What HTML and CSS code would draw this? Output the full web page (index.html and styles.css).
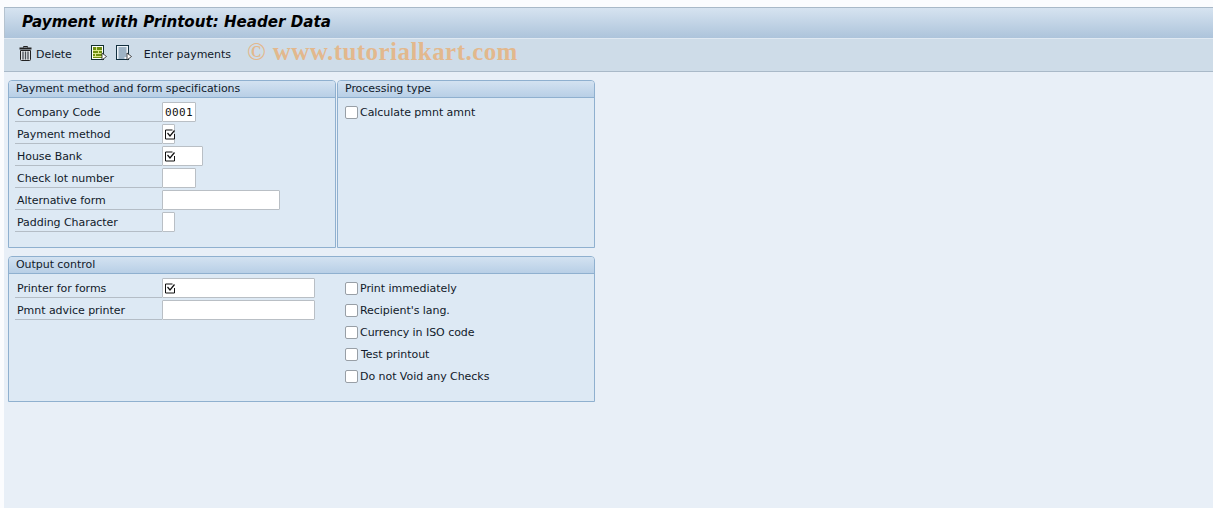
FILE: index.html
```html
<!DOCTYPE html>
<html lang="en">
<head>
<meta charset="utf-8">
<title>Payment with Printout: Header Data</title>
<link rel="stylesheet" href="styles.css">
</head>
<body>
<div class="app">
  <header class="titlebar"><h1>Payment with Printout: Header Data</h1></header>
  <nav class="toolbar">
    <button class="tool tool-delete">
      <svg class="ico" width="13" height="15" viewBox="0 0 13 15">
        <path d="M4.500 1.500V.5h4v1" fill="none" stroke="#222"/>
        <path d="M.5 2.500h12" stroke="#222" stroke-width="2"/>
        <path d="M1.500 4.500h10v9a1 1 0 0 1-1 1h-8a1 1 0 0 1-1-1z" fill="#e2e5e7" stroke="#222"/>
        <path d="M4 5.500v8M6.500 5.500v8M9 5.500v8" stroke="#4a4f55" stroke-width="1.300"/>
      </svg>
      <span>Delete</span>
    </button>
    <button class="tool tool-green">
      <svg class="ico" width="16" height="16" viewBox="0 0 16 16">
        <rect x=".5" y=".5" width="12" height="14" fill="#fff" stroke="#12302f"/>
        <rect x="2" y="2" width="9" height="11" fill="#6f8f12"/>
        <path d="M2 5.500h9M2 8.500h9M2 11.500h9" stroke="#dbe88c"/>
        <path d="M5.500 2v3M7.500 6v2M4.500 9v2" stroke="#dbe88c"/>
        <path d="M11 8v7l4.500-3.500z" fill="#fff" stroke="#222" stroke-width=".8"/>
      </svg>
    </button>
    <button class="tool tool-blue">
      <svg class="ico" width="16" height="16" viewBox="0 0 16 16">
        <rect x=".5" y=".5" width="12" height="14" fill="#eef3f8" stroke="#12303f"/>
        <path d="M2.500 3h8M2.500 5h8M2.500 7h8M2.500 9h8M2.500 11h8M2.500 13h6" stroke="#4f7492"/>
        <path d="M11 8v7l4.500-3.500z" fill="#fff" stroke="#222" stroke-width=".8"/>
      </svg>
    </button>
    <button class="tool tool-enter"><span>Enter payments</span></button>
    <div class="watermark">© www.tutorialkart.com</div>
  </nav>
  <main class="content">
    <div class="top-groups">
      <section class="panel panel-spec">
        <h2>Payment method and form specifications</h2>
        <div class="rows">
          <div class="row"><label>Company Code</label><div class="field w34">0001</div></div>
          <div class="row"><label>Payment method</label><div class="field w13"><svg class="req" width="11" height="11" viewBox="0 0 11 11"><path d="M9.500 5v5H.5V1h7" fill="none" stroke="#111"/><path d="M2.500 4l2.500 3L9.500 1.500" fill="none" stroke="#111" stroke-width="1.200"/></svg></div></div>
          <div class="row"><label>House Bank</label><div class="field w41"><svg class="req" width="11" height="11" viewBox="0 0 11 11"><path d="M9.500 5v5H.5V1h7" fill="none" stroke="#111"/><path d="M2.500 4l2.500 3L9.500 1.500" fill="none" stroke="#111" stroke-width="1.200"/></svg></div></div>
          <div class="row"><label>Check lot number</label><div class="field w34"></div></div>
          <div class="row"><label>Alternative form</label><div class="field w118"></div></div>
          <div class="row"><label>Padding Character</label><div class="field w13"></div></div>
        </div>
      </section>
      <section class="panel panel-proc">
        <h2>Processing type</h2>
        <div class="rows checks">
          <div class="check"><span class="box"></span><span>Calculate pmnt amnt</span></div>
        </div>
      </section>
    </div>
    <section class="panel panel-output">
      <h2>Output control</h2>
      <div class="output-body">
        <div class="rows">
          <div class="row"><label>Printer for forms</label><div class="field w153"><svg class="req" width="11" height="11" viewBox="0 0 11 11"><path d="M9.500 5v5H.5V1h7" fill="none" stroke="#111"/><path d="M2.500 4l2.500 3L9.500 1.500" fill="none" stroke="#111" stroke-width="1.200"/></svg></div></div>
          <div class="row"><label>Pmnt advice printer</label><div class="field w153"></div></div>
        </div>
        <div class="rows checks">
          <div class="check"><span class="box"></span><span>Print immediately</span></div>
          <div class="check"><span class="box"></span><span>Recipient's lang.</span></div>
          <div class="check"><span class="box"></span><span>Currency in ISO code</span></div>
          <div class="check check-wide"><span class="box"></span><span>Test printout</span></div>
          <div class="check"><span class="box"></span><span>Do not Void any Checks</span></div>
        </div>
      </div>
    </section>
  </main>
</div>
</body>
</html>
```
FILE: styles.css
```css
html, body {
  margin: 0;
  height: 100%;
  background: #fbfcfe;
  overflow: hidden;
}
body {
  font-family: "DejaVu Sans", sans-serif;
  font-size: 11px;
  letter-spacing: -.05px;
  color: #111a2a;
}
.app {
  margin: 7px 0 0 4px;
  height: 501px;
  background: #e8eff7;
  border-top: 1px solid #a9b9c8;
}
.titlebar {
  height: 30px;
  display: flex;
  align-items: center;
  padding-left: 17px;
  background: linear-gradient(#d6e3f0, #adc4db);
  border-left: 1px solid #b5c3d0;
}
.titlebar h1 {
  margin: 0;
  font-size: 15.1px;
  font-weight: bold;
  font-style: italic;
  letter-spacing: 0;
  color: #000;
  white-space: nowrap;
  position: relative;
  top: -1px;
}
.toolbar {
  position: relative;
  height: 30px;
  display: flex;
  align-items: center;
  background: #cedce8;
  border-top: 1px solid #e0e9f2;
  border-bottom: 1px solid #a9b9c8;
  padding: 0 0 2px 15px;
}
.tool {
  display: flex;
  align-items: center;
  gap: 4px;
  padding: 0;
  border: 0;
  background: none;
  font: inherit;
  letter-spacing: inherit;
  color: inherit;
}
.tool-green { margin-left: 19px; }
.tool-blue { margin-left: 9px; }
.tool-enter { margin-left: 12px; }
.ico { display: block; margin-top: -2px; }
.watermark {
  position: absolute;
  left: 243px;
  top: -1px;
  line-height: 28px;
  font-family: "Liberation Serif", serif;
  font-weight: bold;
  font-size: 25px;
  letter-spacing: .45px;
  color: rgba(240, 160, 80, .6);
  white-space: nowrap;
}
.content {
  padding: 8px 0 0 4px;
  width: 587px;
}
.top-groups {
  display: grid;
  grid-template-columns: 328px 258px;
  gap: 1px;
}
.panel {
  background: #dde9f4;
  border: 1px solid #8fb0cf;
  border-radius: 4px 4px 0 0;
  box-sizing: border-box;
  height: 168px;
}
.panel-output {
  margin-top: 8px;
  height: 146px;
}
.panel h2 {
  margin: 0;
  height: 16px;
  line-height: 15px;
  padding-left: 7px;
  font-size: 11px;
  font-weight: normal;
  color: #111a2a;
  background: linear-gradient(#d3e2f1, #b8cfe6);
  border-bottom: 1px solid #8fb0cf;
  border-radius: 3px 3px 0 0;
}
.rows {
  display: flex;
  flex-direction: column;
  gap: 2px;
  padding: 4px 0 0 6px;
}
.row {
  display: flex;
  height: 20px;
}
.row label {
  width: 147px;
  box-sizing: border-box;
  padding: 3px 0 0 2px;
  line-height: 15px;
  border-bottom: 1px solid #b4bdc6;
}
.field {
  height: 20px;
  box-sizing: border-box;
  background: #fff;
  border: 1px solid #b9bfc5;
  border-radius: 1px;
  padding: 0 2px;
  font-family: "DejaVu Sans Mono", monospace;
  font-size: 11px;
  letter-spacing: .4px;
  color: #111;
  display: flex;
  align-items: center;
}
.w13 { width: 13px; }
.w34 { width: 34px; }
.w41 { width: 41px; }
.w118 { width: 118px; }
.w153 { width: 153px; }
.req { display: block; flex: none; }
.checks { padding-left: 7px; }
.check {
  height: 20px;
  display: flex;
  align-items: center;
  gap: 2px;
}
.check-wide { gap: 3px; }
.box {
  width: 13px;
  height: 13px;
  box-sizing: border-box;
  background: #fff;
  border: 1px solid #989fa6;
  border-radius: 2px;
}
.output-body {
  display: grid;
  grid-template-columns: 329px 1fr;
}
```
